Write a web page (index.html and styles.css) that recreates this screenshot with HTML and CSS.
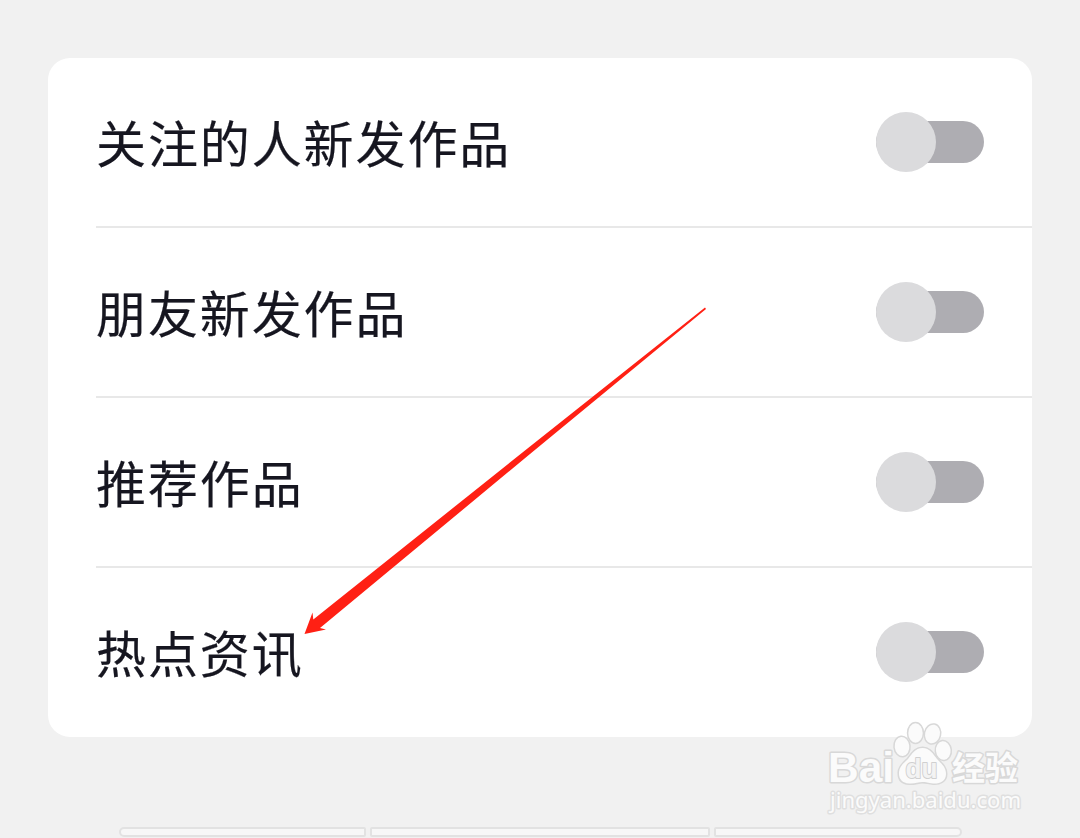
FILE: index.html
```
<!DOCTYPE html>
<html lang="zh-CN">
    <head>
        <meta charset="utf-8" />
        <meta name="viewport" content="width=device-width, initial-scale=1" />
        <link rel="stylesheet" href="styles.css">
    </head>
    <body>
        <div class="settings">
            <div class="row">
                <span class="label">关注的人新发作品</span>
                <div class="switch"><div class="knob"></div></div>
            </div>
            <div class="row">
                <span class="label">朋友新发作品</span>
                <div class="switch"><div class="knob"></div></div>
            </div>
            <div class="row">
                <span class="label">推荐作品</span>
                <div class="switch"><div class="knob"></div></div>
            </div>
            <div class="row">
                <span class="label">热点资讯</span>
                <div class="switch"><div class="knob"></div></div>
            </div>
        </div>
        <div class="bars">
            <div class="bar first"></div>
            <div class="bar middle"></div>
            <div class="bar last"></div>
        </div>

        <svg class="arrow" viewBox="0 0 1080 838">
            <path d="M304.5 634 L312.5 612.5 L313.3 619.5 L530 446.500 L705 307.5 L706 309 L530 454 L320 628 L326 629.5 Z" />
        </svg>

        <svg class="watermark" viewBox="820 715 220 105">
            <g class="paw">
                <ellipse cx="902" cy="746.5" rx="7.3" ry="9.5" transform="rotate(-6 902 746.5)" />
                <ellipse cx="915.5" cy="733" rx="7.2" ry="9.7" />
                <ellipse cx="932.5" cy="734" rx="7.4" ry="9.4" transform="rotate(12 932.5 734)" />
                <ellipse cx="943.3" cy="750.5" rx="7.3" ry="9.2" transform="rotate(-6 943.3 750.5)" />
                <path d="M922.5 748 C930 748 933 754 937 759 C943 765 946 768 946 774 C946 781 940 784 933 783.5 C928 783 926 782 922.5 782 C918 782 915 784 909 783.5 C902 783 898.500 779 899 772 C899.500 766 904 763 908 759 C912 754 915 748 922.5 748 Z" />
            </g>
            <text class="logo" x="828" y="782" textLength="66" lengthAdjust="spacingAndGlyphs">Bai</text>
            <text class="du" x="905.5" y="778" textLength="32" lengthAdjust="spacingAndGlyphs">du</text>
            <text class="name" x="952" y="780" textLength="66" lengthAdjust="spacingAndGlyphs">经验</text>
            <text class="site" x="830" y="808" textLength="191" lengthAdjust="spacingAndGlyphs">jingyan.baidu.com</text>
        </svg>
    </body>
</html>
```
FILE: styles.css
```
body {
    background-color: #f1f1f1;
    box-sizing: border-box;
    font-family: "Noto Sans CJK SC", sans-serif;
    height: 838px;
    margin: 0;
    overflow: hidden;
    padding: 58px 48px 0;
    position: relative;
}
.settings {
    background-color: #fff;
    border-radius: 22px;
    height: 679px;
    overflow: hidden;
    padding-left: 48px;
}
.row {
    align-items: center;
    border-bottom: 2px solid #e8e8e8;
    box-sizing: border-box;
    display: flex;
    height: 170px;
    justify-content: space-between;
    padding-right: 48px;
}
.row:last-child {
    border-bottom-color: transparent;
}
.label {
    -webkit-text-stroke: 0.2px #161620;
    color: #161620;
    font-size: 50px;
    letter-spacing: 1.9px;
    line-height: 76px;
    padding-bottom: 2px;
}
/* Switch, in the off position */
.switch {
    align-items: center;
    background-color: #aeadb2;
    border-radius: 21px;
    display: flex;
    height: 42px;
    width: 108px;
}
.knob {
    background-color: #dbdbdd;
    border-radius: 50%;
    flex: none;
    height: 60px;
    width: 60px;
}
/* Bottom strip */
.bars {
    display: flex;
    gap: 4px;
    padding: 90px 0 0 71px;
}
.bar {
    background-color: #f7f7f7;
    border: 2px solid #e2e2e2;
    box-sizing: border-box;
    height: 10px;
}
.first {
    border-radius: 5px 2px 2px 5px;
    width: 247px;
}
.middle {
    border-radius: 2px;
    width: 340px;
}
.last {
    border-radius: 2px 5px 5px 2px;
    width: 248px;
}
.arrow {
    fill: #ff2014;
    height: 838px;
    left: 0;
    position: absolute;
    top: 0;
    width: 1080px;
}
.watermark {
    fill: #fbfbfb;
    height: 105px;
    left: 820px;
    paint-order: stroke;
    position: absolute;
    stroke: #d8d8d8;
    stroke-linejoin: round;
    stroke-width: 3px;
    top: 715px;
    width: 220px;
}
.logo {
    font-family: "Liberation Sans", sans-serif;
    font-size: 43px;
    font-weight: bold;
}
.du {
    fill: #f3f3f3;
    font-family: "Liberation Sans", sans-serif;
    font-size: 28px;
    font-weight: bold;
    stroke: #d0d0d0;
    stroke-width: 2px;
}
.name {
    font-family: "Noto Sans CJK SC", sans-serif;
    font-size: 33px;
    font-weight: bold;
}
.site {
    font-family: "Noto Sans", sans-serif;
    font-size: 22px;
    stroke: #dfdfdf;
}
```
